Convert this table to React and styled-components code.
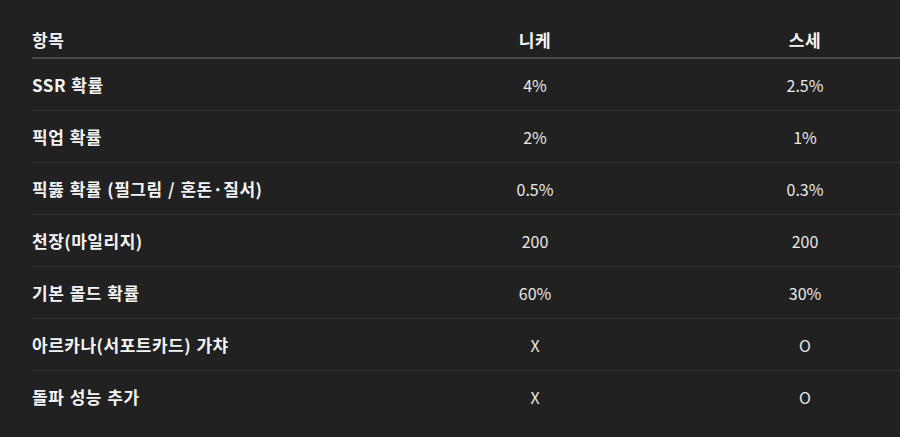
import React from 'react';
import styled, { createGlobalStyle } from 'styled-components';

const GlobalStyle = createGlobalStyle`
    html, body {
        margin: 0;
        padding: 0;
        background: #212121;
        overflow: hidden;
    }
    body {
        font-family: "Noto Sans CJK KR", "Noto Sans", sans-serif;
        color: #ececec;
    }
`

const rows = [
    ["SSR 확률", "4%", "2.5%"],
    ["픽업 확률", "2%", "1%"],
    ["픽뚫 확률 (필그림 / 혼돈·질서)", "0.5%", "0.3%"],
    ["천장(마일리지)", "200", "200"],
    ["기본 몰드 확률", "60%", "30%"],
    ["아르카나(서포트카드) 가챠", "X", "O"],
    ["돌파 성능 추가", "X", "O"],
];

const App = () => {
    return (
        <Page>
            <GlobalStyle />
            <Table>
                <HeadRow>
                    <Cell $head>항목</Cell>
                    <Cell $head $center>니케</Cell>
                    <Cell $head $center>스세</Cell>
                </HeadRow>
                {rows.map(([label, nikke, sse], i) => (
                    <Row key={label} $last={i === rows.length - 1}>
                        <Cell $head>{label}</Cell>
                        <Cell $center>{nikke}</Cell>
                        <Cell $center>{sse}</Cell>
                    </Row>
                ))}
            </Table>
        </Page>
    );
}

export default App;

const Page = styled.div`
    width: 900px;
    height: 437px;
    padding: 23px 0 0 32px;
    box-sizing: border-box;
    overflow: hidden;
`

const Table = styled.div`
    width: 908px;
    display: flex;
    flex-direction: column;
`

const HeadRow = styled.div`
    display: grid;
    grid-template-columns: 368px 270px 270px;
    height: 34px;
    align-items: center;
    border-bottom: 2px solid #4a4a4a;
`

const Row = styled.div`
    display: grid;
    grid-template-columns: 368px 270px 270px;
    height: 51px;
    align-items: center;
    border-bottom: 1px solid ${({ $last }) => ($last ? 'transparent' : '#2f2f2f')};
`

const Cell = styled.div`
    font-size: ${({ $head }) => ($head ? '17px' : '16px')};
    line-height: 20px;
    font-weight: ${({ $head }) => ($head ? 700 : 400)};
    letter-spacing: ${({ $head }) => ($head ? '0.5px' : '0')};
    word-spacing: ${({ $head }) => ($head ? '1px' : '0')};
    text-align: ${({ $center }) => ($center ? 'center' : 'left')};
    color: ${({ $head }) => ($head ? '#f4f4f4' : '#e8e8e8')};
    white-space: nowrap;
`
